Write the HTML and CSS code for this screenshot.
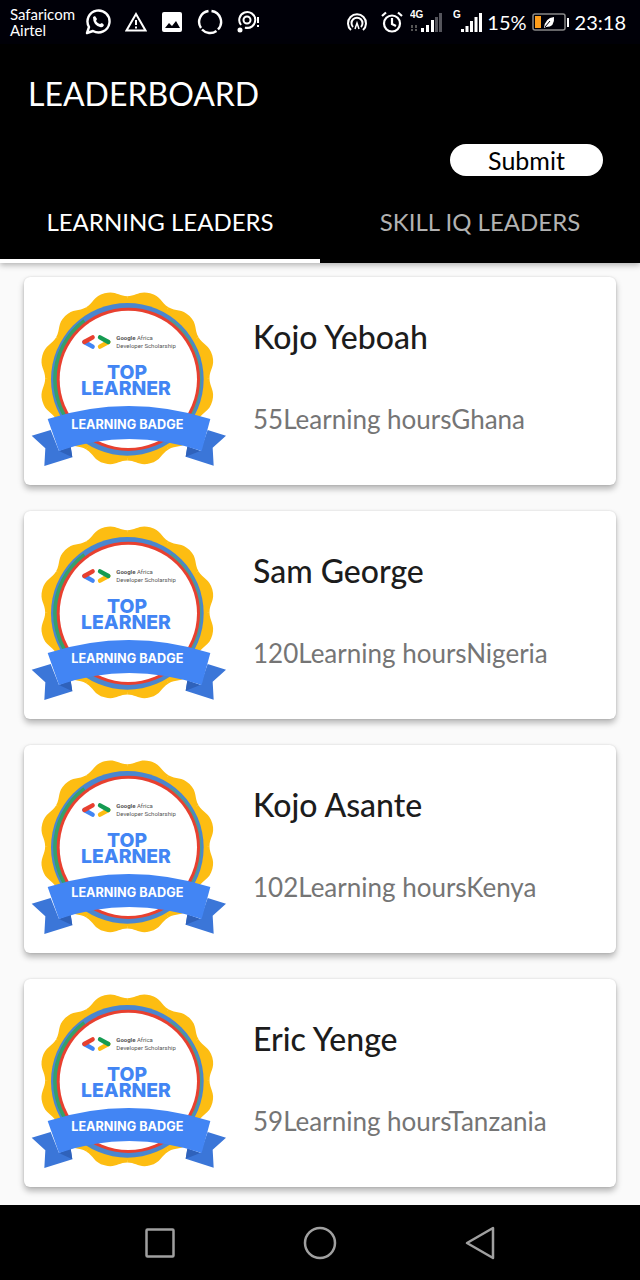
FILE: index.html
```html
<!DOCTYPE html>
<html lang="en">
<head>
<meta charset="utf-8">
<meta name="viewport" content="width=device-width, initial-scale=1">
<title>Leaderboard</title>
<link rel="stylesheet" href="styles.css">
</head>
<body>
<svg class="defs" aria-hidden="true">
  <defs>
    <path id="lobe" d="M0 0L-64-238C-38-245-34-264 0-264S38-245 64-238Z"/>
    <g id="lobes">
      <use href="#lobe" transform="rotate(15)"/>
      <use href="#lobe" transform="rotate(45)"/>
      <use href="#lobe" transform="rotate(75)"/>
    </g>
    <symbol id="badge" viewBox="33 60 588 534">
      <g transform="translate(322 325)" fill="#fdbd12">
        <circle r="240"/>
        <use href="#lobes"/>
        <use href="#lobes" transform="rotate(90)"/>
        <use href="#lobes" transform="rotate(180)"/>
        <use href="#lobes" transform="rotate(270)"/>
      </g>
      <circle cx="322" cy="328" r="229" fill="#4a86cf"/>
      <path d="M190 148A224 224 0 0 0 190 508L210 480A190 190 0 0 1 210 176Z" fill="#36a06a"/>
      <path d="M454 148A224 224 0 0 1 454 508L434 480A190 190 0 0 0 434 176Z" fill="#4c9a96"/>
      <circle cx="325" cy="328" r="215" fill="#e8402f"/>
      <circle cx="325" cy="328" r="206" fill="#fff"/>
      <g fill="none" stroke-width="13" stroke-linecap="round">
        <path d="M193 216L218 230" stroke="#4285f4"/>
        <path d="M193 216L218 202" stroke="#e8402f"/>
        <path d="M265 216L240 230" stroke="#fdbd12"/>
        <path d="M240 202L265 216" stroke="#159b52"/>
      </g>
      <g class="badge-text">
        <text class="badge-small" x="289" y="211"><tspan class="badge-brand">Google</tspan> Africa</text>
        <text class="badge-small" x="289" y="233">Developer Scholarship</text>
        <text class="badge-title" x="321" y="326">TOP</text>
        <text class="badge-title" x="318" y="376">LEARNER</text>
      </g>
      <path d="M35 497L92 480L117 543L152 531L157 562L73 588L76 535Z" fill="#3b76d8"/>
      <path d="M618 497L563 480L541 543L502 531L497 560L581 587L578 533Z" fill="#3b76d8"/>
      <path d="M117 543L152 529L157 562ZM541 543L502 529L497 560Z" fill="#2f62bb"/>
      <path d="M83 447Q325 369 571 447L545 543Q325 471 117 543Z" fill="#4285f4"/>
      <text class="badge-ribbon" x="322" y="476">LEARNING BADGE</text>
    </symbol>
  </defs>
</svg>

<div class="status">
  <div class="status-group status-left">
    <div class="carrier">Safaricom<br>Airtel</div>
    <svg width="26" height="26" viewBox="0 0 26 26" fill="none" stroke="#fff" stroke-width="2.4"><path d="M2 24L4 18A11 11 0 1 1 8 22Z" stroke-linejoin="round"/><path d="M8 8L10 7L12 10L11 12Q13 15 15 15L17 14L19 16Q18 19 15 18Q8 16 8 8Z" fill="#fff" stroke="none"/></svg>
    <svg width="22" height="26" viewBox="0 0 22 26" fill="none" stroke="#fff" stroke-width="2"><path d="M11 5L20.5 21.500H1.500Z"/><path d="M11 11V16M11 17.500V19.500"/></svg>
    <svg width="22" height="26" viewBox="0 0 22 26"><rect x="1" y="3" width="20" height="20" rx="2" fill="#fff"/><path d="M4 19L8 14L11 17L15 12L19 19Z" fill="#000008"/></svg>
    <svg width="26" height="26" viewBox="0 0 26 26" fill="none" stroke="#fff" stroke-width="2.4"><path d="M14.500 2A11 11 0 0 1 21 20.500M19.500 22A11 11 0 0 1 5 20.500M4 19A11 11 0 0 1 11.500 2"/></svg>
    <svg width="24" height="26" viewBox="0 0 24 26" fill="none" stroke="#fff" stroke-width="2"><path d="M4 16A8 8 0 1 1 8 18.700H12"/><circle cx="10" cy="11" r="3.500"/><circle cx="3" cy="21" r="1.500" fill="#fff"/><path d="M21 8V14M21 16V18"/></svg>
  </div>
  <div class="status-group status-right">
    <svg width="22" height="26" viewBox="0 0 22 26" fill="none" stroke="#fff" stroke-width="2"><path d="M5 21A9 9 0 1 1 17 21M7 18A5.500 5.500 0 1 1 15 18"/><path d="M9 20L11 14L13 20" stroke-width="1.500"/></svg>
    <svg class="alarm" width="22" height="26" viewBox="0 0 22 26" fill="none" stroke="#fff" stroke-width="2.200"><circle cx="11" cy="14.500" r="8"/><path d="M1 7L5 3.500M21 7L17 3.500M11 9V15L15 17"/></svg>
    <svg width="32" height="26" viewBox="0 0 32 26"><text class="net" x="0" y="9">4G</text><path d="M2 16V22M6 16V22" stroke="#555" stroke-width="2" stroke-dasharray="3 1"/><path d="M12.500 19V23M17.500 16V23M22.500 11V23" stroke="#fff" stroke-width="3"/><path d="M26.500 8V23M30.500 4V23" stroke="#55555c" stroke-width="3"/></svg>
    <svg class="signal" width="29" height="26" viewBox="0 0 29 26"><text class="net" x="0" y="9">G</text><path d="M9.500 20V23M14 17V23M18.500 12V23M23 8V23M27.500 4V23" stroke="#fff" stroke-width="3"/></svg>
    <span class="percent">15%</span>
    <svg width="38" height="26" viewBox="0 0 38 26"><rect x="1" y="5" width="32" height="16" rx="2" fill="none" stroke="#888" stroke-width="1.500"/><rect x="3" y="7" width="6" height="12" fill="#ff9e1b"/><path d="M12 19Q13 9 22 8Q23 18 14 18Z" fill="#fff"/><path d="M13 18L18 12" stroke="#000008"/><path d="M36 9V18" stroke="#fff" stroke-width="2"/></svg>
    <span class="clock">23:18</span>
  </div>
</div>

<header class="header">
  <h1 class="title">LEADERBOARD</h1>
  <button class="submit" type="button">Submit</button>
  <div class="tabs" role="tablist">
    <button class="tab tab-active" type="button" role="tab" aria-selected="true">LEARNING LEADERS</button>
    <button class="tab" type="button" role="tab" aria-selected="false">SKILL IQ LEADERS</button>
  </div>
</header>

<main class="list">
  <article class="card">
    <svg class="badge" role="img" aria-label="Top learner badge"><use href="#badge"/></svg>
    <div class="info"><h2 class="name">Kojo Yeboah</h2><p class="detail">55Learning hoursGhana</p></div>
  </article>
  <article class="card">
    <svg class="badge" role="img" aria-label="Top learner badge"><use href="#badge"/></svg>
    <div class="info"><h2 class="name">Sam George</h2><p class="detail">120Learning hoursNigeria</p></div>
  </article>
  <article class="card">
    <svg class="badge" role="img" aria-label="Top learner badge"><use href="#badge"/></svg>
    <div class="info"><h2 class="name">Kojo Asante</h2><p class="detail">102Learning hoursKenya</p></div>
  </article>
  <article class="card">
    <svg class="badge" role="img" aria-label="Top learner badge"><use href="#badge"/></svg>
    <div class="info"><h2 class="name">Eric Yenge</h2><p class="detail">59Learning hoursTanzania</p></div>
  </article>
</main>

<nav class="navbar" aria-label="System">
  <button class="nav-button" type="button" aria-label="Recent apps"><svg width="34" height="34" viewBox="0 0 34 34"><rect x="3.500" y="3.500" width="27" height="27" rx="1"/></svg></button>
  <button class="nav-button" type="button" aria-label="Home"><svg width="34" height="34" viewBox="0 0 34 34"><circle cx="17" cy="17" r="15"/></svg></button>
  <button class="nav-button" type="button" aria-label="Back"><svg width="34" height="34" viewBox="0 0 34 34"><path d="M4 17L30 2V32Z"/></svg></button>
</nav>
</body>
</html>
```
FILE: styles.css
```css
* {
  box-sizing: border-box;
}

body {
  margin: 0;
  min-height: 100vh;
  display: flex;
  flex-direction: column;
  background: #fafafa;
  font-family: Lato, "Open Sans", sans-serif;
}

button {
  border: 0;
  padding: 0;
  background: none;
  font-family: inherit;
  cursor: pointer;
}

svg {
  display: block;
  flex: none;
}

.defs {
  position: absolute;
  width: 0;
  height: 0;
}

.status {
  display: flex;
  justify-content: space-between;
  height: 44px;
  padding: 0 14px 0 10px;
  background: #000008;
  color: #fff;
}

.status-group {
  display: flex;
  align-items: center;
}

.status-left {
  gap: 14px;
}

.status-right {
  gap: 5px;
}

.carrier {
  width: 61px;
  font-size: 15px;
  line-height: 16px;
  white-space: nowrap;
}

.alarm {
  margin: 0 2px 0 8px;
}

.signal {
  margin-left: 6px;
}

.net {
  font: 700 10px "Liberation Sans", sans-serif;
  fill: #fff;
}

.percent,
.clock {
  font-size: 20px;
}

.header {
  display: flex;
  flex-direction: column;
  background: #000;
  color: #fff;
  box-shadow: 0 2px 6px rgba(0, 0, 0, 0.3);
}

.title {
  margin: 30px 28px 0;
  font-size: 32px;
  font-weight: 400;
  line-height: 40px;
}

.submit {
  align-self: flex-end;
  width: 153px;
  height: 32px;
  margin: 30px 37px 0 0;
  border-radius: 16px;
  background: #fff;
  color: #000;
  font-size: 25px;
  line-height: 32px;
}

.tabs {
  display: grid;
  grid-template-columns: 1fr 1fr;
  margin-top: 4px;
}

.tab {
  height: 83px;
  border-top: 4px solid transparent;
  border-bottom: 4px solid transparent;
  color: #b2b2b2;
  font-size: 24px;
}

.tab-active {
  border-bottom-color: #fff;
  color: #fff;
}

.list {
  flex: 1;
  display: flex;
  flex-direction: column;
  gap: 26px;
  padding: 14px 24px 18px;
}

.card {
  display: flex;
  align-items: flex-start;
  gap: 26px;
  height: 208px;
  padding: 13px 7px;
  border-radius: 6px;
  background: #fff;
  box-shadow: 0 4px 6px rgba(0, 0, 0, 0.28), 0 0 2px rgba(0, 0, 0, 0.15);
}

.badge {
  width: 196px;
  height: 178px;
}

.badge-text {
  fill: #4285f4;
}

.badge-title,
.badge-ribbon {
  font-family: Inter, sans-serif;
  font-weight: 800;
  text-anchor: middle;
}

.badge-title {
  font-size: 58px;
}

.badge-ribbon {
  font-size: 38px;
  font-weight: 700;
  fill: #fff;
}

.badge-small {
  font-family: Roboto, sans-serif;
  font-size: 18px;
  fill: #555;
}

.badge-brand {
  font-weight: 700;
}

.info {
  padding-top: 29px;
}

.name {
  margin: 0;
  color: #1c1c1c;
  font-size: 32px;
  font-weight: 500;
  line-height: 36px;
}

.detail {
  margin: 48px 0 0;
  color: #757575;
  font-size: 26px;
  line-height: 32px;
}

.navbar {
  display: flex;
  justify-content: center;
  align-items: center;
  gap: 126px;
  height: 75px;
  background: #000;
}

.nav-button svg {
  fill: none;
  stroke: #a0a0a0;
  stroke-width: 2.5;
  stroke-linejoin: round;
}
```
